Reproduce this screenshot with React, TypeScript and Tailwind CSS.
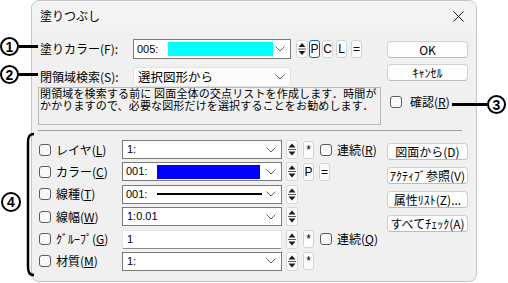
import React from "react";

const jp = "font-['Noto_Sans_CJK_JP',sans-serif]";

function Chevron() {
  return (
    <svg width="10" height="6" viewBox="0 0 10 6" className="shrink-0">
      <path d="M0.5 0.5 L5 5 L9.5 0.5" fill="none" stroke="#606060" strokeWidth="1" />
    </svg>
  );
}

function Spinner({ h = 18 }: { h?: number }) {
  const mid = h / 2;
  return (
    <svg width="12" height={h} viewBox={`0 0 12 ${h}`} className="shrink-0">
      <rect x="0.5" y="0.5" width="11" height={h - 1} rx="2" fill="#fbfbfb" stroke="#d6d6d6" />
      <path d={`M6 ${mid - 6} L9.5 ${mid - 2} L2.5 ${mid - 2} Z`} fill="#1a1a1a" />
      <line x1="2" y1={mid} x2="10" y2={mid} stroke="#5a5a5a" strokeWidth="1" />
      <path d={`M6 ${mid + 6} L9.5 ${mid + 2} L2.5 ${mid + 2} Z`} fill="#1a1a1a" />
    </svg>
  );
}

function SmallBtn({ t, focus = false, ml = "ml-[2px]" }: { t: string; focus?: boolean; ml?: string }) {
  return (
    <div
      className={`${ml} w-[11px] h-[18px] shrink-0 rounded-[3px] flex items-center justify-center text-[12px] leading-none bg-[#fdfdfd] border ${
        focus ? "border-[#0067c0] border-[1.5px]" : "border-[#d2d2d2]"
      } font-['Liberation_Sans',sans-serif] text-black`}
    >
      {t}
    </div>
  );
}

function Btn({ children }: { children: React.ReactNode }) {
  return (
    <div
      className={`w-[81px] h-[17px] shrink-0 rounded-[4px] bg-[#fdfdfd] border border-[#d0d0d0] border-b-[#bcbcbc] flex items-center justify-center text-[12px] leading-none text-black ${jp}`}
    >
      {children}
    </div>
  );
}

function Check() {
  return <div className="w-[12px] h-[12px] shrink-0 rounded-[3px] border border-[#5c5c5c] bg-[#f9f9f9]" />;
}

function U({ c }: { c: string }) {
  return <span className="underline underline-offset-[1px] decoration-[1px]">{c}</span>;
}

function Combo({ children, w = 160, h = 19 }: { children?: React.ReactNode; w?: number; h?: number }) {
  return (
    <div
      className="shrink-0 border border-[#7a7a7a] bg-white flex items-center pl-[3px] pr-[5px]"
      style={{ width: w, height: h }}
    >
      <div className="flex-1 flex items-center min-w-0 h-full">{children}</div>
      <Chevron />
    </div>
  );
}

function LowRow({
  label,
  combo,
  extra,
}: {
  label: React.ReactNode;
  combo: React.ReactNode;
  extra?: React.ReactNode;
}) {
  return (
    <div className="h-[22.4px] flex items-start">
      <div className="h-[19px] flex items-center">
        <div className="w-[83px] flex items-center">
          <Check />
          <span className={`ml-[5px] text-[12px] leading-none text-black ${jp}`}>{label}</span>
        </div>
        {combo}
        <div className="ml-[4px]">
          <Spinner h={19} />
        </div>
        {extra}
      </div>
    </div>
  );
}

export default function App() {
  const mono = "font-['Liberation_Sans',sans-serif] text-[11px] leading-none text-black";
  return (
    <div className="relative w-[508px] h-[283px] bg-white overflow-hidden">
      {/* dialog */}
      <div className="ml-[31px] w-[446px] h-[282px] border border-[#c4c4c4] rounded-[8px] bg-[#f0f0f0] overflow-hidden flex flex-col">
        {/* title bar */}
        <div className="h-[30px] shrink-0 bg-[#f3f3f3] flex items-center pl-[8px] pr-[12px]">
          <span className={`text-[12px] leading-none text-black ${jp}`}>塗りつぶし</span>
          <svg width="11" height="11" viewBox="0 0 11 11" className="ml-auto">
            <path d="M0.5 0.5 L10.5 10.5 M10.5 0.5 L0.5 10.5" stroke="#1a1a1a" strokeWidth="1" />
          </svg>
        </div>

        {/* upper */}
        <div className="flex">
          <div className="flex flex-col">
            <div className="mt-[8px] h-[20px] flex items-center pl-[8px]">
              <span className={`w-[93px] text-[12px] leading-none text-black ${jp}`}>塗りカラー(F):</span>
              <Combo w={158} h={20}>
                <span className={mono}>005:</span>
                <div className="ml-[10px] w-[105px] h-[14px] bg-[#00ffff]" />
              </Combo>
              <div className="ml-[5px]">
                <Spinner h={18} />
              </div>
              <SmallBtn t="P" focus ml="ml-[1px]" />
              <SmallBtn t="C" ml="ml-[2px]" />
              <SmallBtn t="L" ml="ml-[3px]" />
              <SmallBtn t="=" ml="ml-[4px]" />
            </div>
            <div className="mt-[8px] h-[20px] flex items-center pl-[8px]">
              <span className={`w-[93px] text-[12px] leading-none text-black ${jp}`}>閉領域検索(S):</span>
              <div className="w-[158px] h-[20px] shrink-0 bg-[#fbfbfb] border border-[#e2e2e2] rounded-[3px] flex items-center pl-[4px] pr-[5px]">
                <span className={`flex-1 text-[12.5px] leading-none text-black ${jp}`}>選択図形から</span>
                <Chevron />
              </div>
            </div>
            <div className={`ml-[6px] w-[343px] h-[38px] border border-[#b8b8b8] text-[11px] leading-[12px] tracking-[0.15px] text-black ${jp} pl-[1px] whitespace-nowrap`}>
              <div className="-mt-[1px]">閉領域を検索する前に 図面全体の交点リストを作成します．時間が</div>
              <div>かかりますので、必要な図形だけを選択することをお勧めします．</div>
            </div>
          </div>
          <div className="ml-auto mr-[8px] flex flex-col">
            <div className="mt-[10px]">
              <Btn>OK</Btn>
            </div>
            <div className="mt-[6px]">
              <Btn>ｷｬﾝｾﾙ</Btn>
            </div>
            <div className="mt-[15px] ml-[3px] flex items-center">
              <Check />
              <span className={`ml-[8px] text-[12px] leading-none text-black ${jp}`}>
                確認(<U c="R" />)
              </span>
            </div>
          </div>
        </div>

        {/* separator */}
        <div className="mt-[5px] ml-[6px] w-[424px] h-px bg-[#a0a0a0] shrink-0" />

        {/* lower */}
        <div className="flex mt-[9px]">
          <div className="flex flex-col pl-[7px]">
            <LowRow
              label={<>レイヤ(<U c="L" />)</>}
              combo={
                <Combo>
                  <span className={`${mono} ml-[1px]`}>1:</span>
                </Combo>
              }
              extra={
                <>
                  <SmallBtn t="*" ml="ml-[5px]" />
                  <div className="ml-[6px] flex items-center">
                    <Check />
                    <span className={`ml-[5px] text-[12px] leading-none text-black ${jp}`}>
                      連続(<U c="R" />)
                    </span>
                  </div>
                </>
              }
            />
            <LowRow
              label={<>カラー(<U c="C" />)</>}
              combo={
                <Combo>
                  <span className={mono}>001:</span>
                  <div className="ml-[10px] w-[103px] h-[14px] bg-[#0000ff]" />
                </Combo>
              }
              extra={
                <>
                  <SmallBtn t="P" ml="ml-[5px]" />
                  <SmallBtn t="=" ml="ml-[5px]" />
                </>
              }
            />
            <LowRow
              label={<>線種(<U c="T" />)</>}
              combo={
                <Combo>
                  <span className={mono}>001:</span>
                  <div className="ml-[10px] w-[105px] h-[2px] bg-black" />
                </Combo>
              }
            />
            <LowRow
              label={<>線幅(<U c="W" />)</>}
              combo={
                <Combo>
                  <span className={`${mono} ml-[1px]`}>1:0.01</span>
                </Combo>
              }
            />
            <LowRow
              label={<>ｸﾞﾙｰﾌﾟ(<U c="G" />)</>}
              combo={
                <div className="w-[160px] h-[19px] shrink-0 bg-white border border-[#e4e4e4] border-b-[#8a8a8a] rounded-[2px] flex items-center pl-[4px]">
                  <span className={mono}>1</span>
                </div>
              }
              extra={
                <>
                  <SmallBtn t="*" ml="ml-[5px]" />
                  <div className="ml-[6px] flex items-center">
                    <Check />
                    <span className={`ml-[5px] text-[12px] leading-none text-black ${jp}`}>
                      連続(<U c="Q" />)
                    </span>
                  </div>
                </>
              }
            />
            <LowRow
              label={<>材質(<U c="M" />)</>}
              combo={
                <Combo>
                  <span className={`${mono} ml-[1px]`}>1:</span>
                </Combo>
              }
              extra={<SmallBtn t="*" ml="ml-[5px]" />}
            />
          </div>
          <div className="ml-auto mr-[8px] flex flex-col gap-[7px] mt-[3px]">
            <Btn>図面から(D)</Btn>
            <Btn>ｱｸﾃｨﾌﾞ参照(V)</Btn>
            <Btn>属性ﾘｽﾄ(Z)...</Btn>
            <Btn>すべてﾁｪｯｸ(A)</Btn>
          </div>
        </div>
      </div>

      {/* annotations */}
      <div className="absolute left-[0px] top-[37px] flex items-center">
        <div className="w-[19px] h-[19px] rounded-full border-[2px] border-black flex items-center justify-center font-['Liberation_Sans',sans-serif] font-bold text-[14px] leading-none text-black">1</div>
        <div className="w-[19px] h-[3px] bg-black" />
      </div>
      <div className="absolute left-[0px] top-[65px] flex items-center">
        <div className="w-[19px] h-[19px] rounded-full border-[2px] border-black flex items-center justify-center font-['Liberation_Sans',sans-serif] font-bold text-[14px] leading-none text-black">2</div>
        <div className="w-[19px] h-[3px] bg-black" />
      </div>
      <div className="absolute left-[452px] top-[95px] flex items-center">
        <div className="w-[35px] h-[3px] bg-black" />
        <div className="w-[19px] h-[19px] rounded-full border-[2px] border-black flex items-center justify-center font-['Liberation_Sans',sans-serif] font-bold text-[14px] leading-none text-black">3</div>
      </div>
      <div className="absolute left-[1px] top-[192px] w-[20px] h-[20px] rounded-full border-[2px] border-black flex items-center justify-center font-['Liberation_Sans',sans-serif] font-bold text-[14px] leading-none text-black">4</div>
      <svg className="absolute left-[24px] top-[132px]" width="12" height="146" viewBox="0 0 12 146">
        <path d="M10 2 C5 2 4 5 4 10 L4 134 C4 140 5 143 10 143" fill="none" stroke="black" strokeWidth="2.5" />
      </svg>
    </div>
  );
}
